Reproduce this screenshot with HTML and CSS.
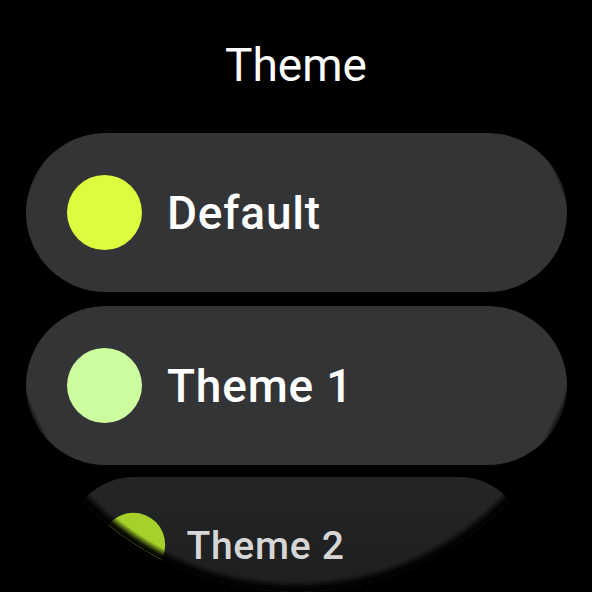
FILE: index.html
```html
<!DOCTYPE html>
<html>
<head>
<meta charset="utf-8">
<link rel="stylesheet" href="styles.css">
</head>
<body>
<div class="screen">
  <h1 class="title">Theme</h1>
  <div class="list">
    <div class="chip">
      <span class="dot dot-default"></span>
      <span class="label">Default</span>
    </div>
    <div class="chip">
      <span class="dot dot-one"></span>
      <span class="label">Theme 1</span>
    </div>
    <div class="chip chip-far">
      <span class="dot dot-two"></span>
      <span class="label">Theme 2</span>
    </div>
  </div>
  <div class="vignette"></div>
</div>
</body>
</html>
```

FILE: styles.css
```css
html, body {
  margin: 0;
  padding: 0;
  background: #000;
}
.screen {
  position: relative;
  width: 592px;
  height: 592px;
  border-radius: 50%;
  overflow: hidden;
  background: #000;
  font-family: Roboto, "Noto Sans", sans-serif;
}
.title {
  margin: 0;
  padding-top: 37px;
  height: 133px;
  box-sizing: border-box;
  text-align: center;
  color: #fff;
  font-size: 46px;
  font-weight: 400;
  line-height: 56px;
}
.list {
  display: flex;
  flex-direction: column;
  gap: 14px;
  padding: 0 25px 0 26px;
}
.chip {
  display: flex;
  align-items: center;
  height: 159px;
  border-radius: 80px;
  background: #333436;
  padding-left: 41px;
  gap: 25px;
}
.dot {
  width: 75px;
  height: 75px;
  border-radius: 50%;
  flex: none;
}
.dot-default { background: #dffb3d; }
.dot-one { background: #cdfc9e; }
.dot-two { background: #a6d12a; }
.label {
  color: #fff;
  font-size: 46px;
  font-weight: 500;
  letter-spacing: 0.8px;
  line-height: 1;
}
.chip-far {
  margin-top: -2px;
  background: linear-gradient(#242527, #1c1d1f);
  transform: scale(0.85);
  transform-origin: 50% 0;
}
.chip-far .label {
  color: #d6d6d6;
}
.vignette {
  position: absolute;
  inset: 0;
  border-radius: 50%;
  background: radial-gradient(circle at 50% 50%, rgba(0,0,0,0) 0, rgba(0,0,0,0) 285px, rgba(0,0,0,0.9) 292px, #000 296px);
  pointer-events: none;
}
```
